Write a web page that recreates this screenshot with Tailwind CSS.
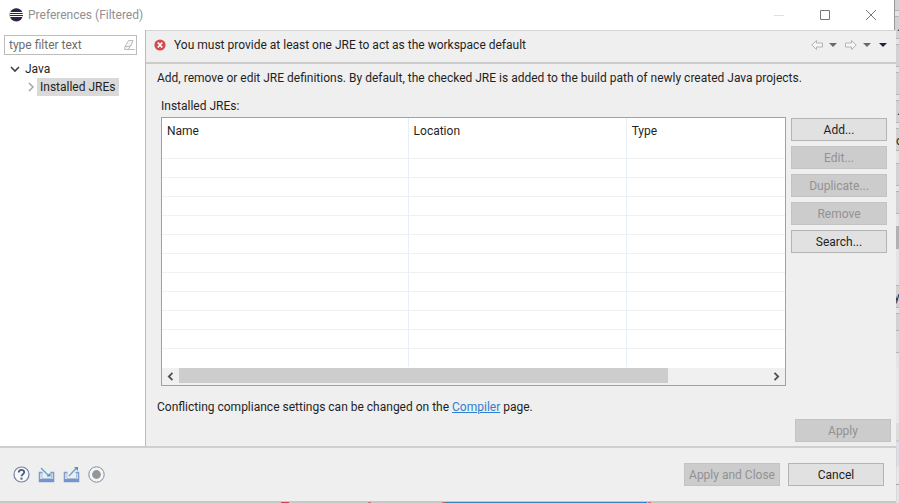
<!DOCTYPE html>
<html lang="en">
<head>
<meta charset="utf-8">
<title>Preferences (Filtered)</title>
<script src="https://cdn.jsdelivr.net/npm/@tailwindcss/browser@4"></script>
</head>
<body class="relative flex h-screen flex-col overflow-hidden bg-[#d8d8d8] text-xs text-[#1f1f1f]" style="font-family:Roboto,'Open Sans',sans-serif">

<!-- Window behind the dialog: right edge -->
<div class="absolute inset-y-0 right-0 flex w-[5px] flex-col overflow-hidden bg-[#e4e4e4]" aria-hidden="true">
  <div class="h-[11px] shrink-0 border-b border-[#b4b4b4] bg-[#d2d2d2]"></div>
  <div class="mt-[5px] h-[23px] shrink-0 border-y border-[#b4b4b4] bg-[#d2d2d2] pl-[3px] leading-[20px]">.</div>
  <div class="mt-[5px] h-[23px] shrink-0 border-y border-[#b4b4b4] bg-[#d2d2d2]"></div>
  <div class="mt-[5px] h-[23px] shrink-0 border-y border-[#b4b4b4] bg-[#d2d2d2]"></div>
  <div class="mt-[5px] h-[23px] shrink-0 border-y border-[#b4b4b4] bg-[#d2d2d2] pl-[3px] leading-[20px]">.</div>
  <div class="mt-[5px] h-[23px] shrink-0 border-y border-[#b4b4b4] bg-[#d2d2d2] pl-[2px] leading-[24px]">o</div>
  <div class="mt-[12px] h-[23px] shrink-0 border-y border-[#b4b4b4] bg-[#d2d2d2]"></div>
  <div class="mt-[5px] h-[23px] shrink-0 border-y border-[#b4b4b4] bg-[#d2d2d2]"></div>
  <div class="mt-[12px] h-[23px] shrink-0 bg-[#b2b2b2]"></div>
  <div class="mt-[36px] h-[23px] shrink-0 border-y border-[#b4b4b4] bg-[#d2d2d2] leading-[22px]">y</div>
  <div class="mt-[5px] h-[17px] shrink-0 border-t border-[#b4b4b4] bg-[#d2d2d2]"></div>
  <div class="h-[23px] shrink-0 border-y border-[#b4b4b4] bg-[#dadada]"></div>
  <div class="mt-[15px] h-[55px] shrink-0 bg-[#e8e8e8]"></div>
  <div class="h-[17px] shrink-0 bg-[#dcdcdc]"></div>
  <div class="h-[27px] shrink-0 border-t-2 border-[#ccccde] bg-[#dedee6]"></div>
  <div class="h-[18px] shrink-0 border-b border-[#a8a8a8] bg-[#e8e8e8]"></div>
</div>

<!-- Title bar -->
<header class="relative mr-[5px] flex h-[30px] shrink-0 items-center bg-white pl-2 shadow-[1px_0_0_#999]">
  <svg class="size-4" viewBox="0 0 16 16" aria-hidden="true">
    <circle cx="7.4" cy="7.8" r="6.2" fill="#f0a840"/>
    <circle cx="8.4" cy="7.8" r="6.6" fill="#2b2350"/>
    <path d="M2 5.500h12.800M1.700 7.500h13.400M2 9.500h12.800" stroke="#fff" stroke-width="1"/>
  </svg>
  <h1 class="ml-1 flex-1 text-[#909090]">Preferences (Filtered)</h1>
  <div class="flex">
    <button class="flex h-[28px] w-[46px] items-center justify-center" aria-label="Minimize" disabled><svg class="h-3 w-3" viewBox="0 0 12 12"><path d="M1 6.5h10" stroke="#e0e0e0"/></svg></button>
    <button class="flex h-[28px] w-[46px] items-center justify-center" aria-label="Maximize"><svg class="h-3 w-3" viewBox="0 0 12 12"><path d="M1.5 1.5h9v9h-9z" fill="none" stroke="#777"/></svg></button>
    <button class="flex h-[28px] w-[46px] items-center justify-center" aria-label="Close"><svg class="h-3 w-3" viewBox="0 0 12 12"><path d="M1 1l10 10M11 1L1 11" stroke="#777"/></svg></button>
  </div>
</header>

<div class="relative mr-[3px] flex min-h-0 flex-1 bg-[#efefef]">
  <!-- Tree -->
  <aside class="w-[146px] shrink-0 border-r border-[#bcbcbc] bg-white px-1">
    <div class="mt-[5px] mr-1 flex h-5 items-center border border-[#bdbdbd] pr-px pl-1">
      <input type="text" aria-label="Filter" placeholder="type filter text" class="min-w-0 flex-1 bg-transparent outline-none placeholder:text-[#6e6e6e]">
      <svg class="size-3" viewBox="0 0 12 12" fill="none" stroke="#bcbcbc" aria-hidden="true"><path d="M5.500 1.500h4.500l-2 5-3 4H1.500l.5-3zM2 7.500h4l2-1" fill="#f4f4f4"/><path d="M5 10.500h7"/></svg>
    </div>
    <ul class="mt-[5px] leading-[18px]">
      <li>
        <div class="flex items-center pl-[5px]">
          <svg class="h-3 w-3" viewBox="0 0 12 12"><path d="M2 4l4 4 4-4" fill="none" stroke="#404040" stroke-width="1.600"/></svg>
          <span class="ml-1">Java</span>
        </div>
        <ul>
          <li class="flex items-center pl-[21px]">
            <svg class="h-3 w-3" viewBox="0 0 12 12"><path d="M4 2l4 4-4 4" fill="none" stroke="#a0a0a0" stroke-width="1.400"/></svg>
            <span class="bg-[#d9d9d9] px-[3px]">Installed JREs</span>
          </li>
        </ul>
      </li>
    </ul>
  </aside>

  <!-- Page -->
  <main class="flex min-w-0 flex-1 flex-col border-t border-[#d4d4d4]">
    <div class="flex h-[33px] shrink-0 items-center border-b-2 border-[#cbcbcb] pr-[9px] pb-1 pl-2">
      <svg class="size-3" viewBox="0 0 12 12" aria-hidden="true"><circle cx="6" cy="6" r="5.600" fill="#d6494c"/><path d="M3.800 3.500l4.400 5M8.200 3.500l-4.400 5" stroke="#fff" stroke-width="1.700"/></svg>
      <p class="ml-2 flex-1">You must provide at least one JRE to act as the workspace default</p>
      <div class="flex items-center gap-2">
        <div class="flex items-center gap-1.5">
          <button aria-label="Back" disabled><svg class="h-3 w-3" viewBox="0 0 12 12"><path d="M.8 6l4.700-4.500v2.500h6v4h-6v2.500z" fill="#f6f6f6" stroke="#b4b4b4"/></svg></button>
          <button aria-label="Back history"><svg class="h-1 w-2" viewBox="0 0 8 4"><path d="M0 0h8L4 4z" fill="#666a6c"/></svg></button>
        </div>
        <div class="flex items-center gap-1.5">
          <button aria-label="Forward" disabled><svg class="h-3 w-3" viewBox="0 0 12 12"><path d="M11.200 6l-4.700-4.500v2.500h-6v4h6v2.500z" fill="#f6f6f6" stroke="#b4b4b4"/></svg></button>
          <button aria-label="Forward history"><svg class="h-1 w-2" viewBox="0 0 8 4"><path d="M0 0h8L4 4z" fill="#666a6c"/></svg></button>
        </div>
        <button aria-label="View menu"><svg class="h-1 w-2" viewBox="0 0 8 4"><path d="M0 0h8L4 4z" fill="#2c1c48"/></svg></button>
      </div>
    </div>
    <div class="flex min-h-0 flex-1 flex-col pr-[5px] pb-1 pl-[11px]">
      <p class="mt-[5px] leading-[18px]">Add, remove or edit JRE definitions. By default, the checked JRE is added to the build path of newly created Java projects.</p>
      <p id="jres" class="mt-[10px] pl-1 leading-[18px]">Installed JREs:</p>
      <div class="mt-[2px] flex min-h-0 flex-1 gap-[5px] pr-1 pl-1">
        <div class="flex min-w-0 flex-1 flex-col border border-[#a0a0a5] bg-white">
          <div class="min-h-0 flex-1 overflow-hidden">
            <table class="w-full table-fixed border-collapse" aria-labelledby="jres">
              <colgroup><col class="w-[39.500%]"><col class="w-[35%]"><col></colgroup>
              <thead><tr class="h-[21px] text-left leading-4"><th class="border-r border-[#e9eef5] pt-1 pl-[5px] font-normal">Name</th><th class="border-r border-[#e9eef5] pt-1 pl-[5px] font-normal">Location</th><th class="pt-1 pl-[5px] font-normal">Type</th></tr></thead>
              <tbody id="rows"></tbody>
            </table>
          </div>
          <div class="flex h-[17px] shrink-0 items-start bg-[#f0f0f0]">
            <button class="flex h-4 w-[17px] items-center justify-center" aria-label="Scroll left"><svg class="size-[9px]" viewBox="0 0 9 9"><path d="M6.500 .8L2.800 4.500l3.700 3.700" fill="none" stroke="#505050" stroke-width="1.800"/></svg></button>
            <div class="h-[15px] flex-1"><div class="h-full w-[83%] bg-[#cdcdcd]"></div></div>
            <button class="flex h-4 w-[17px] items-center justify-center" aria-label="Scroll right"><svg class="size-[9px]" viewBox="0 0 9 9"><path d="M2.500 .8l3.700 3.700-3.700 3.700" fill="none" stroke="#505050" stroke-width="1.800"/></svg></button>
          </div>
        </div>
        <div class="flex w-24 shrink-0 flex-col gap-[5px] pt-px">
          <button class="h-[23px] border border-[#b4b4b4] bg-[#e1e1e1]">Add...</button>
          <button class="h-[23px] border border-[#c3c3c3] bg-[#cccccc] text-[#929292]" disabled>Edit...</button>
          <button class="h-[23px] border border-[#c3c3c3] bg-[#cccccc] text-[#929292]" disabled>Duplicate...</button>
          <button class="h-[23px] border border-[#c3c3c3] bg-[#cccccc] text-[#929292]" disabled>Remove</button>
          <button class="h-[23px] border border-[#b4b4b4] bg-[#e1e1e1]">Search...</button>
        </div>
      </div>
      <p class="mt-3 leading-[18px]">Conflicting compliance settings can be changed on the <a href="#" class="text-[#2f80d0] underline">Compiler</a> page.</p>
      <button class="mt-[3px] h-[23px] w-24 shrink-0 self-end border border-[#c3c3c3] bg-[#cccccc] text-[#929292]" disabled>Apply</button>
    </div>
  </main>
</div>

<!-- Button bar -->
<footer class="relative mr-[3px] flex h-[55px] shrink-0 items-center border-t-2 border-[#cfcfcf] bg-[#efefef] pr-3 pl-[13px] shadow-[0_1px_1px_#aaa]">
  <div class="flex flex-1 items-center gap-2">
    <button aria-label="Help"><svg class="size-[17px]" viewBox="0 0 17 17" fill="none"><circle cx="8.500" cy="8.500" r="7.500" fill="#f7f8fa" stroke="#76839c" stroke-width="1.200"/><path d="M5.800 6.500c0-3.400 5.400-3.400 5.400-.2 0 1.900-2.700 1.900-2.700 4" stroke="#4c6182" stroke-width="1.900"/><path d="M8.500 11.600v2" stroke="#4c6182" stroke-width="2"/></svg></button>
    <button aria-label="Import"><svg class="size-[17px]" viewBox="0 0 17 17" fill="none"><path d="M4.500 6.500h-3v9h14v-9h-3" stroke="#7f9dcc" stroke-width="1.600"/><path d="M4 7v5.500h9.500V7" stroke="#a9bfe0"/><path d="M1 14.500h15" stroke="#7495ca" stroke-width="3"/><path d="M3 2l7.500 7.500" stroke="#64abd0" stroke-width="1.500"/><path d="M8.500 10.500h4v-4z" fill="#4b94bd"/></svg></button>
    <button aria-label="Export"><svg class="size-[17px]" viewBox="0 0 17 17" fill="none"><path d="M4.500 6.500h-3v9h14v-9h-3" stroke="#7f9dcc" stroke-width="1.600"/><path d="M4 7v5.500h9.500V7" stroke="#a9bfe0"/><path d="M1 14.500h15" stroke="#7495ca" stroke-width="3"/><path d="M6 10l7-7.500" stroke="#64abd0" stroke-width="1.500"/><path d="M11 1h4v4z" fill="#4b94bd"/></svg></button>
    <button aria-label="Record"><svg class="size-[17px]" viewBox="0 0 17 17" fill="none"><circle cx="8.500" cy="8.500" r="7.700" fill="#f5f6f8" stroke="#7e8ba3"/><circle cx="8.500" cy="8.500" r="4.400" fill="#959595"/></svg></button>
  </div>
  <button class="h-[23px] w-24 border border-[#c3c3c3] bg-[#cccccc] whitespace-nowrap text-[#929292]" disabled>Apply and Close</button>
  <button class="ml-2 h-[23px] w-24 border border-[#b4b4b4] bg-[#e1e1e1]">Cancel</button>
</footer>

<!-- Window behind the dialog: bottom edge -->
<div class="relative mr-[3px] flex h-[2px] shrink-0 items-end bg-[#c8c8c8] pl-[281px]" aria-hidden="true">
  <span class="h-px w-2 bg-[#e04040]"></span>
  <span class="ml-[79px] h-px w-[3px] bg-[#d07070]"></span>
  <span class="ml-[71px] h-px w-[3px] bg-[#d07070]"></span>
  <span class="h-px w-[202px] bg-[#3b80c0]"></span>
  <span class="ml-px h-px w-[3px] bg-[#d07070]"></span>
</div>

<script>
document.getElementById('rows').innerHTML = Array.from({length: 12}, (_, i) =>
  `<tr class="h-[19px] ${i < 11 ? 'border-b border-[#f0f0f2]' : ''}"><td class="border-r border-[#e9eff8] p-0"></td><td class="border-r border-[#e9eff8] p-0"></td><td class="p-0"></td></tr>`
).join('');
</script>
</body>
</html>
